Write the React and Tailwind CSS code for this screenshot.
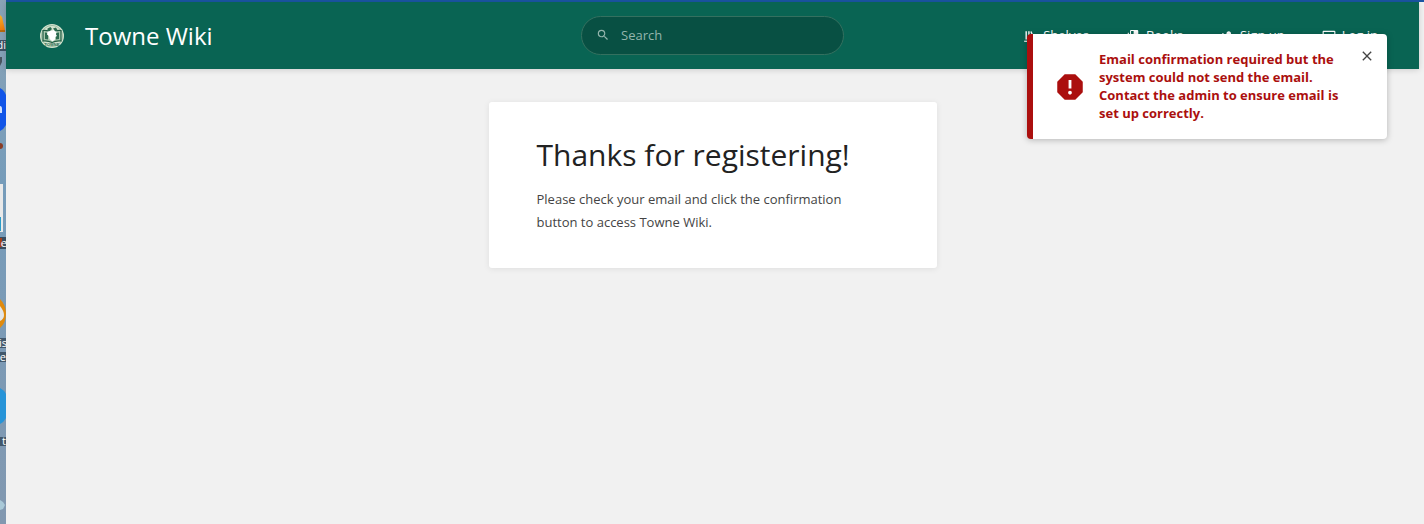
import { useState } from 'react';
import { MdClose, MdInput, MdPersonAdd, MdReport, MdSearch } from 'react-icons/md';

const ShelvesIcon = ({ className }) => (
    <svg viewBox="0 0 24 24" fill="currentColor" className={className} aria-hidden="true">
        <path d="M6.658 3.643V18h-2.38V3.643zM11.326 3.643V18H8.947V3.643zM14.722 3.856l5.613 13.214-2.19.93-5.613-13.214z" />
        <path d="M2 20h20v2H2z" />
    </svg>
);

const BooksIcon = ({ className }) => (
    <svg viewBox="0 0 24 24" fill="currentColor" className={className} aria-hidden="true">
        <path d="M19.252 1.708H8.663a1.77 1.77 0 0 0-1.765 1.764v14.12c0 .97.794 1.764 1.765 1.764h10.59a1.77 1.77 0 0 0 1.764-1.765V3.472a1.77 1.77 0 0 0-1.765-1.764zM8.663 3.472h4.412v7.06l-2.206-1.324-2.206 1.324z" />
        <path d="M2.966 6.61v14c0 1.1.9 2 2 2h14v-2h-14v-14z" />
    </svg>
);

const Logo = () => (
    <svg viewBox="0 0 26 26" className="size-[26px]" aria-hidden="true">
        <circle cx="13" cy="13" r="12" fill="#d3e3cf" />
        <circle cx="13" cy="13" r="10.6" fill="none" stroke="#7fa78c" strokeWidth="0.6" />
        <path d="M4 7.500q5-.5 9 2 4-2.500 9-2v10.500q-5-.5-9 1.500-4-2-9-1.500z" fill="#a9c8af" stroke="#1f5c43" strokeWidth="1.200" />
        <path d="M6 9.500q2 0 3 .6v6.400q-1.500-.5-3-.5zM20 9.500q-2 0-3 .6v6.400q1.500-.5 3-.5z" fill="#2c6b50" />
        <path d="M8.500 8.500l2-1.500 2 1 2-1 3 1.500-.5 3 1 1.500-2 1v2.500l-2.500 2-3-2.500-.5-3-2-1.500z" fill="#fff" />
        <path d="M8.500 5.500l3-1.500 1.500 2-2 2-2.500.5zM14 5.500l3-1 1.500 2.500-2 1.500z" fill="#2c6b50" />
        <text x="13" y="23" textAnchor="middle" fontSize="4" fontWeight="700" fill="#2c6b50" fontFamily="Liberation Sans, sans-serif">TOWNE</text>
    </svg>
);

// Sliver of the desktop that shows beside the browser window
const Desktop = () => (
    <aside className="w-1.5 shrink-0 overflow-hidden bg-[#7f9fb8]" aria-hidden="true">
        <svg width="6" height="524" fontSize="11" fontFamily="Open Sans, sans-serif" textAnchor="end">
            <defs>
                <linearGradient id="sky" x1="0" y1="0" x2="0" y2="1">
                    <stop offset="0" stopColor="#8aa3b6" />
                    <stop offset="0.35" stopColor="#769cba" />
                    <stop offset="1" stopColor="#8298b0" />
                </linearGradient>
                <linearGradient id="cone" x1="0" y1="0" x2="0" y2="1">
                    <stop offset="0" stopColor="#f8b32a" />
                    <stop offset="1" stopColor="#ee7a0c" />
                </linearGradient>
            </defs>
            <rect width="6" height="524" fill="url(#sky)" />
            <path d="M0 15l2 2 3 13H0z" fill="url(#cone)" />
            <path d="M0 30h5v2H0z" fill="#b5690f" />
            <rect y="40" width="6" height="11" fill="#3d5064" />
            <text x="6" y="49" fill="#fff">di</text>
            <path d="M0 57h2v5l-2 4z" fill="#4a5661" />
            <path d="M0 88q4 2 6 7v30q-2 4-6 6z" fill="#1155e8" />
            <path d="M0 106q2 0 2 3v4H0z" fill="#cfe0ff" />
            <circle cx="0" cy="146" r="3" fill="#8a3d26" />
            <rect y="184" width="3" height="48" fill="#e9e9e9" />
            <rect y="217" width="1" height="14" fill="#2a9cc9" />
            <rect y="237" width="6" height="12" fill="#3a4d60" />
            <rect y="238" width="2" height="9" fill="#a6421b" />
            <text x="7" y="247" fill="#fff">e</text>
            <path d="M0 299q6 6 6 15t-6 14z" fill="#e08a0c" />
            <path d="M0 306q4 5 4 9t-4 6z" fill="#e3e6e8" />
            <rect y="338" width="6" height="10" fill="#42586c" />
            <text x="7" y="347" fill="#fff">is</text>
            <rect y="352" width="6" height="10" fill="#42586c" />
            <text x="6" y="361" fill="#fff">e</text>
            <path d="M0 388q4 2 6 6v24q-2 4-6 6z" fill="#2794d8" />
            <rect y="437" width="6" height="9" fill="#42586c" />
            <text x="6" y="445" fill="#fff">t</text>
            <path d="M0 500l3 2 2 3-2 4-3 1z" fill="#a9c9d8" />
        </svg>
    </aside>
);

const navLinks = [
    { label: 'Shelves', icon: ShelvesIcon },
    { label: 'Books', icon: BooksIcon },
    { label: 'Sign up', icon: MdPersonAdd },
    { label: 'Log in', icon: MdInput }
];

const Header = () => {
    const [query, setQuery] = useState('');

    return (
        <header className="grid grid-cols-[1fr_263px_1fr] items-center bg-[#096453] py-3.5 text-white shadow-[0_1px_6px_rgba(0,0,0,0.15)]">
            <a href="#" className="flex items-center gap-5 pl-[33px] text-2xl">
                <Logo />
                <span>Towne Wiki</span>
            </a>
            <form role="search" onSubmit={(e) => e.preventDefault()} className="flex h-[39px] items-center rounded-full border border-[#34705f] bg-[#085043] text-[#93b5ac]">
                <button type="submit" aria-label="Search" className="pr-[11px] pb-0.5 pl-3.5">
                    <MdSearch className="size-3.5" />
                </button>
                <input
                    type="text"
                    name="term"
                    aria-label="Search"
                    placeholder="Search"
                    value={query}
                    onChange={(e) => setQuery(e.target.value)}
                    className="w-full min-w-0 bg-transparent text-[13px] outline-none placeholder:text-[#93b5ac]"
                />
            </form>
            <nav className="flex justify-end gap-[37px] pr-[41px] text-[13px]">
                {navLinks.map(({ label, icon: Icon }) => (
                    <a key={label} href="#" className="flex items-center gap-1.5">
                        <Icon className="size-3.5" />
                        {label}
                    </a>
                ))}
            </nav>
        </header>
    );
};

const Notification = ({ onClose }) => (
    <div role="alert" className="absolute top-[34px] right-[37px] flex w-[360px] items-center rounded border-l-6 border-[#ab0f0e] bg-white pr-3 pl-5 text-[#ab0f0e] shadow-[0_1px_6px_rgba(0,0,0,0.25)]">
        <MdReport className="size-[34px] shrink-0" />
        <p className="ml-3 flex-1 pt-4 pb-[17px] text-[13px] leading-[18px] font-bold">
            Email confirmation required but the system could not send the email. Contact the admin to ensure email is set up correctly.
        </p>
        <button type="button" onClick={onClose} aria-label="Close" className="self-start pt-3.5 text-[#444]">
            <MdClose className="size-4" />
        </button>
    </div>
);

export default function App() {
    const [showNotification, setShowNotification] = useState(true);

    return (
        <div className="relative flex min-h-screen bg-[#f1f1f1] font-['Open_Sans',sans-serif]">
            <Desktop />
            <div className="flex-1 border-t-2 border-[#1a56a4] pr-[5px]">
                <Header />
                <main className="mx-auto mt-[33px] w-full max-w-[448px] rounded-[3px] bg-white px-12 pt-8 pb-[34px] shadow-[0_1px_6px_rgba(0,0,0,0.08)]">
                    <h1 className="text-[30px] leading-[42px] font-normal text-[#222]">Thanks for registering!</h1>
                    <p className="mt-3 max-w-80 text-[13px] leading-[23px] text-[#444]">
                        Please check your email and click the confirmation button to access Towne Wiki.
                    </p>
                </main>
            </div>
            {showNotification && <Notification onClose={() => setShowNotification(false)} />}
        </div>
    );
}
